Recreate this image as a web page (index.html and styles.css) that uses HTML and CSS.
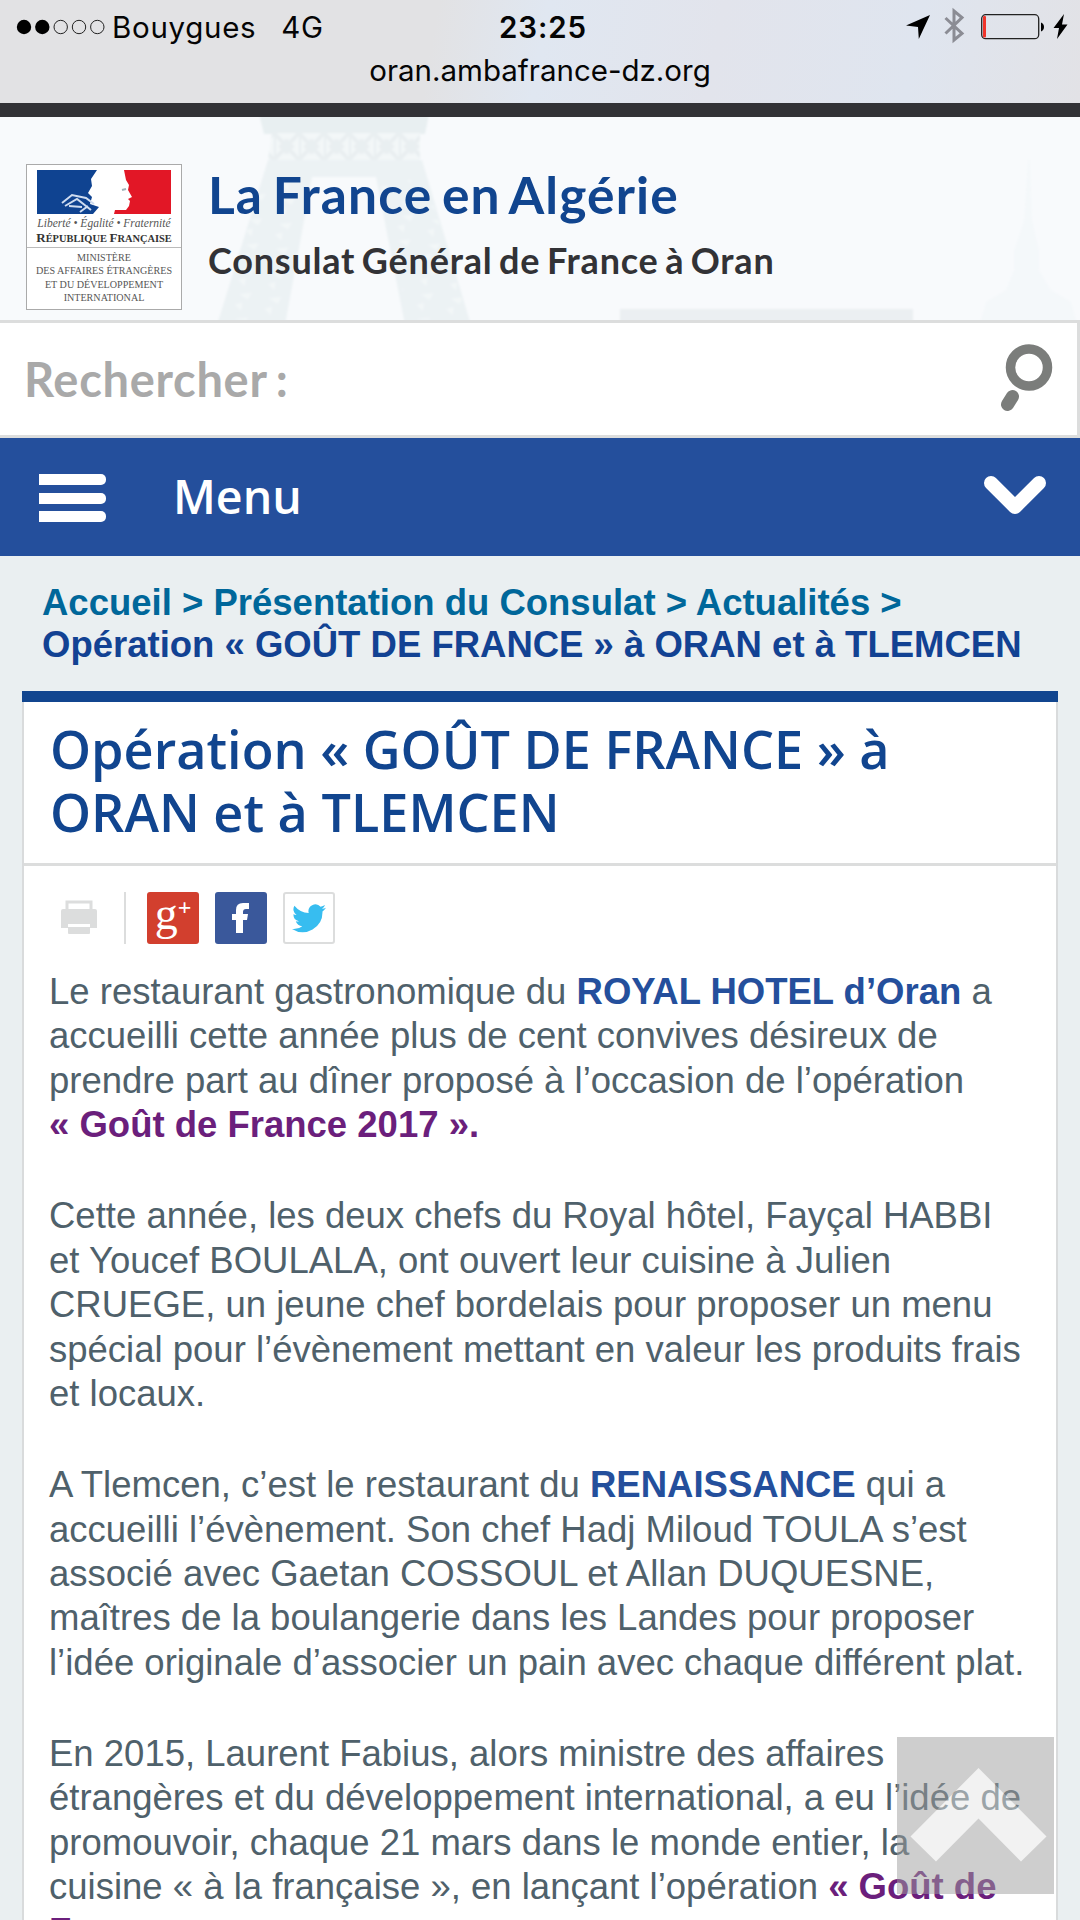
FILE: index.html
```html
<!DOCTYPE html>
<html lang="fr">
<head>
    <meta charset="UTF-8">
    <meta name="viewport" content="width=device-width, initial-scale=1.0">
    <title>La France en Algérie - Consulat Général de France à Oran</title>
    <link rel="stylesheet" href="styles.css">
</head>
<body>
    <div class="status">
        <div class="status-row">
            <div class="carrier">
                <svg class="dots" width="90" height="16" viewBox="0 0 90 16">
                    <circle cx="8" cy="8" r="7.2"/>
                    <circle cx="26.3" cy="8" r="7.2"/>
                    <g fill="none" stroke="#222" stroke-width="1">
                        <circle cx="44.7" cy="8" r="6.7"/>
                        <circle cx="63" cy="8" r="6.7"/>
                        <circle cx="81.3" cy="8" r="6.7"/>
                    </g>
                </svg>
                <span class="operator">Bouygues</span>
                <span class="network">4G</span>
            </div>
            <span class="time">23:25</span>
            <svg class="status-icons" width="164" height="40" viewBox="0 0 164 40">
                <path d="M24 8L0 18.5l12 1.5.8 12z"/>
                <path d="M39.500 11l16.500 15.500-8 6.500V4l8 6.500L39.500 26.500" fill="none" stroke="#8b8c94" stroke-width="3"/>
                <rect x="75.700" y="7.700" width="57" height="24" rx="4" fill="none" stroke="#222" stroke-width="1.300"/>
                <rect x="77" y="9" width="3" height="21.500" rx="1" fill="#f0352b"/>
                <path d="M135 15.500c4 1 4 8 0 9z"/>
                <path d="M158 7l-10.500 14h5.500l-2 11 10.500-14.500H156z"/>
            </svg>
        </div>
        <div class="address">oran.ambafrance-dz.org</div>
    </div>

    <header class="header">
        <svg class="skyline" width="1080" height="203" viewBox="0 117 1080 203">
            <defs>
                <pattern id="lattice" width="25" height="27" patternUnits="userSpaceOnUse" patternTransform="translate(274 133)">
                    <path d="M0 0l25 27M25 0L0 27M0 0v27M12.500 6v15M5 13.500h15" stroke="#e9eff1" stroke-width="4" fill="none"/>
                </pattern>
                <pattern id="braces" width="30" height="25" patternUnits="userSpaceOnUse" patternTransform="rotate(8)">
                    <path d="M8 8l12-3-3 7zM5 19l7-3v8z" fill="#f3f7f8"/>
                </pattern>
                <filter id="soft"><feGaussianBlur stdDeviation="1.2"/></filter>
            </defs>
            <g filter="url(#soft)">
                <path d="M258 110h172l-5 24H264z" fill="#e8eff1"/>
                <path d="M272 133h148v27H268z" fill="#f3f7f8"/>
                <path d="M272 133h148v27H268z" fill="url(#lattice)"/>
                <path d="M268 160h154l49 165h-66l-29-148H312l-27 148h-68z" fill="#ecf2f4"/>
                <path d="M262 180h46l-27 140h-60zM380 180h46l42 140h-60z" fill="url(#braces)"/>
                <path d="M620 309h293v14H620z" fill="#ebeff2"/>
                <path d="M1028 160h2l2 60 7 30v20l12 20 20 12 8 28H978l8-28 20-12 8-20v-20l10-30z" fill="#f4f8fa"/>
            </g>
        </svg>
        <div class="logo">
            <svg class="flag" width="134" height="44" viewBox="0 0 134 44">
                <path d="M0 0h60l-6 9 1 7-4 7 4 4-2 7 9 3-6 7H0z" fill="#0f4391"/>
                <path d="M87 0h47v44H77l1-4h11l3-4 1-5-2-2 4-2-4-7 1-5-3-5z" fill="#e21726"/>
                <path d="M25 33l10-8 14 3 8 6M28 36l12-7 14 11M32 36l13 1M43 42l8-6" stroke="#cfdcf0" stroke-width="2" fill="none"/>
                <path d="M85 20l4-1" stroke="#9fb0b8" stroke-width="2"/>
            </svg>
            <div class="motto">Liberté • Égalité • Fraternité</div>
            <div class="republic"><b>R</b>ÉPUBLIQUE <b>F</b>RANÇAISE</div>
            <div class="ministry">MINISTÈRE<br>DES AFFAIRES ÉTRANGÈRES<br>ET DU DÉVELOPPEMENT<br>INTERNATIONAL</div>
        </div>
        <div class="site-name">
            <div class="title">La France en Algérie</div>
            <div class="subtitle">Consulat Général de France à Oran</div>
        </div>
    </header>

    <form class="search">
        <label class="search-label">Rechercher :</label>
        <svg width="54" height="72" viewBox="0 0 54 72">
            <circle cx="29" cy="25.500" r="18.500" fill="none" stroke="#7b7d7b" stroke-width="9.500"/>
            <path d="M12.500 54.500l-5 8" stroke="#7b7d7b" stroke-width="13" stroke-linecap="round"/>
        </svg>
    </form>

    <nav class="menu">
        <div class="burger"><span></span><span></span><span></span></div>
        <span class="menu-label">Menu</span>
        <svg class="chevron" width="64" height="42" viewBox="0 0 64 42">
            <path d="M8 8l24 24L56 8" fill="none" stroke="#fff" stroke-width="14" stroke-linecap="round" stroke-linejoin="round"/>
        </svg>
    </nav>

    <div class="breadcrumb">
        <div class="crumbs">Accueil &gt; Présentation du Consulat &gt; Actualités &gt;</div>
        <div class="current">Opération « GOÛT DE FRANCE » à ORAN et à TLEMCEN</div>
    </div>

    <div class="bar"></div>
    <main class="article">
        <h1>Opération « GOÛT DE FRANCE » à<br>ORAN et à TLEMCEN</h1>
        <div class="share">
            <svg class="printer" width="38" height="36" viewBox="0 0 38 36">
                <path d="M7 9V2h24v7" fill="none" stroke="#dcdddd" stroke-width="3"/>
                <path d="M3 9h32q2 0 2 2v17h-7v-4H8v4H1V11q0-2 2-2z" fill="#dcdddd"/>
                <path d="M8 27h22v6q0 1-1 1H9q-1 0-1-1z" fill="#dcdddd"/>
            </svg>
            <span class="separator"></span>
            <span class="button google">g<sup>+</sup></span>
            <span class="button facebook">
                <svg width="52" height="52" viewBox="0 0 52 52">
                    <path d="M21 41V28h-4v-6h4v-4q0-7 7-7h6v6h-3q-3 0-3 3v2h5l-1 6h-4v13z" fill="#fff"/>
                </svg>
            </span>
            <span class="button twitter">
                <svg width="34" height="29" viewBox="0 0 24 20">
                    <path d="M24 2.400a9.800 9.800 0 0 1-2.800.8A5 5 0 0 0 23.300.5a9.800 9.800 0 0 1-3.100 1.200 4.900 4.900 0 0 0-8.400 4.500A14 14 0 0 1 1.700 1a4.900 4.900 0 0 0 1.500 6.600A4.900 4.900 0 0 1 1 7a4.900 4.900 0 0 0 3.900 4.900 5 5 0 0 1-2.200.1 4.900 4.900 0 0 0 4.600 3.400A9.900 9.900 0 0 1 0 17.400a14 14 0 0 0 21.500-12.400A10 10 0 0 0 24 2.400z" fill="#37bdf0"/>
                </svg>
            </span>
        </div>
        <p>Le restaurant gastronomique du <a>ROYAL HOTEL d’Oran</a> a<br>accueilli cette année plus de cent convives désireux de<br>prendre part au dîner proposé à l’occasion de l’opération<br><strong>« Goût de France 2017 ».</strong></p>
        <p>Cette année, les deux chefs du Royal hôtel, Fayçal HABBI<br>et Youcef BOULALA, ont ouvert leur cuisine à Julien<br>CRUEGE, un jeune chef bordelais pour proposer un menu<br>spécial pour l’évènement mettant en valeur les produits frais<br>et locaux.</p>
        <p>A Tlemcen, c’est le restaurant du <a>RENAISSANCE</a> qui a<br>accueilli l’évènement. Son chef Hadj Miloud TOULA s’est<br>associé avec Gaetan COSSOUL et Allan DUQUESNE,<br>maîtres de la boulangerie dans les Landes pour proposer<br>l’idée originale d’associer un pain avec chaque différent plat.</p>
        <p>En 2015, Laurent Fabius, alors ministre des affaires<br>étrangères et du développement international, a eu l’idée de<br>promouvoir, chaque 21 mars dans le monde entier, la<br>cuisine « à la française », en lançant l’opération <strong>« Goût de<br>France</strong></p>
    </main>

    <div class="to-top">
        <svg width="157" height="157" viewBox="0 0 157 157">
            <path d="M81.500 31l68 68.500-25.500 25-42.500-43-42.500 43-25.500-25z" fill="#e6e6e6"/>
        </svg>
    </div>
</body>
</html>
```
FILE: styles.css
```css
* {
    box-sizing: border-box;
}

body {
    margin: 0;
    height: 1920px;
    overflow: hidden;
    position: relative;
    background-color: #eaeff1;
    font-family: "Liberation Sans", Arial, sans-serif;
}

svg {
    display: block;
    flex: none;
}

.status {
    height: 117px;
    border-bottom: 14px solid #323236;
    background: linear-gradient(100deg, #e2e2e4 40%, #e0e7f1 50%, #e2e4ec 66%, #dfe5ef 84%, #e2e2e6);
    font-family: Inter, sans-serif;
    color: #050505;
}

.status-row {
    display: grid;
    grid-template-columns: 1fr auto 1fr;
    height: 54px;
    padding: 0 10px 0 16px;
    align-items: center;
}

.carrier {
    display: flex;
    align-items: center;
    font-size: 29.5px;
    letter-spacing: 0.7px;
}

.operator {
    margin-left: 6px;
}

.network {
    margin-left: 25px;
}

.time {
    font-size: 29.5px;
    font-weight: 600;
    letter-spacing: 0.9px;
}

.status-icons {
    justify-self: end;
}

.address {
    text-align: center;
    font-size: 29.5px;
    line-height: 32px;
}

.header {
    position: relative;
    display: flex;
    height: 203px;
    padding: 47px 26px 0;
    background-color: #f8fafc;
}

.skyline {
    position: absolute;
    left: 0;
    top: 0;
}

.logo {
    position: relative;
    width: 156px;
    height: 146px;
    border: 1px solid #aaa;
    background-color: #fff;
    padding-top: 5px;
    font-family: "Liberation Serif", serif;
    text-align: center;
    white-space: nowrap;
    color: #555;
}

.flag {
    margin: 0 auto;
}

.motto {
    font-size: 11.5px;
    line-height: 18px;
    font-style: italic;
}

.republic {
    font-size: 10.4px;
    line-height: 12px;
    height: 16px;
    border-bottom: 1px solid #bbb;
    font-weight: bold;
    color: #333;
}

.republic b {
    font-size: 13px;
}

.ministry {
    padding-top: 3px;
    font-size: 10.1px;
    line-height: 13.4px;
}

.site-name {
    position: relative;
    margin-left: 26px;
    font-family: Lato, sans-serif;
    font-weight: bold;
    white-space: nowrap;
}

.title {
    font-size: 51.5px;
    line-height: 60px;
    letter-spacing: 1.1px;
    word-spacing: -4px;
    color: #11458f;
}

.subtitle {
    font-size: 36px;
    line-height: 72px;
    letter-spacing: 0.8px;
    word-spacing: -3px;
    color: #323236;
}

.search {
    display: flex;
    justify-content: space-between;
    height: 118px;
    padding: 19px 23px 0 24px;
    border: 3px solid #dcdddd;
    border-left: 0;
    background-color: #fff;
}

.search-label {
    font-family: Lato, sans-serif;
    font-weight: bold;
    font-size: 47px;
    line-height: 74px;
    letter-spacing: 0.7px;
    word-spacing: -3px;
    color: #a9a9a9;
}

.menu {
    display: flex;
    align-items: center;
    height: 118px;
    padding: 0 33px 0 39px;
    background-color: #244f9c;
    color: #fff;
}

.burger {
    display: flex;
    flex-direction: column;
    gap: 7.5px;
    margin-top: 2px;
}

.burger span {
    width: 67px;
    height: 11px;
    border-radius: 0 5px 5px 0;
    background-color: #fff;
}

.menu-label {
    margin-left: 67px;
    margin-bottom: 2px;
    font-family: "Open Sans", sans-serif;
    font-weight: 600;
    font-size: 46.5px;
}

.chevron {
    margin: 0 0 3px auto;
}

.breadcrumb {
    height: 135px;
    padding: 26px 42px 0;
    font-size: 36.5px;
    line-height: 41.5px;
    font-weight: bold;
    white-space: nowrap;
    color: #124293;
}

.crumbs {
    color: #00679a;
}

.bar {
    height: 11px;
    margin: 0 22px;
    background-color: #11458f;
}

.article {
    margin: 0 22px;
    height: 1300px;
    border: 2px solid #d9dbdc;
    border-width: 0 2px;
    background-color: #fff;
    color: #4f616b;
}

h1 {
    margin: 0;
    height: 164px;
    padding: 16px 26px 0;
    border-bottom: 3px solid #dcdddd;
    font-family: "Open Sans", sans-serif;
    font-weight: 600;
    font-size: 52.2px;
    line-height: 62.5px;
    white-space: nowrap;
    color: #11458f;
}

.share {
    display: flex;
    align-items: center;
    height: 78px;
    padding: 26px 0 0 36px;
    margin-bottom: 26px;
}

.separator {
    width: 2px;
    height: 52px;
    margin: 0 21px 0 26px;
    background-color: #dcdddd;
}

.button {
    display: flex;
    align-items: center;
    justify-content: center;
    width: 52px;
    height: 52px;
    margin-right: 16px;
    border-radius: 3px;
}

.google {
    background-color: #d23f2e;
    color: #fff;
    font-family: "Liberation Serif", serif;
    font-size: 46px;
    line-height: 30px;
    padding-bottom: 9px;
}

.google sup {
    align-self: flex-start;
    font-size: 24px;
    font-weight: bold;
}

.facebook {
    background-color: #3a589b;
}

.twitter {
    border: 2px solid #dcdddd;
}

p {
    margin: 0 26px 46.8px 25px;
    font-size: 36.5px;
    line-height: 44.4px;
    white-space: nowrap;
}

p a {
    font-weight: bold;
    color: #244f9c;
}

p strong {
    color: #6b1f7c;
}

.to-top {
    position: absolute;
    left: 897px;
    top: 1737px;
    width: 157px;
    height: 157px;
    background-color: #9f9f9f;
    opacity: 0.5;
}
```
